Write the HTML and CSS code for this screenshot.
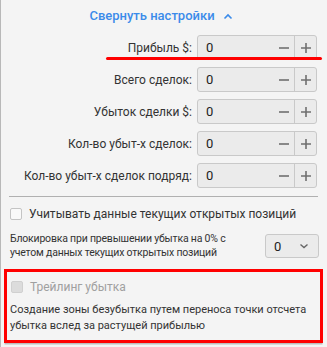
FILE: index.html
```html
<!DOCTYPE html>
<html lang="ru">
<head>
  <meta charset="UTF-8">
  <title>Настройки</title>
  <link rel="stylesheet" href="styles.css">
</head>
<body>
  <div class="panel">
    <div class="toggle">
      <span>Свернуть настройки</span>
      <svg width="10" height="7" viewBox="0 0 10 7"><path d="M1.5 5.5 L5 2 L8.5 5.5" fill="none" stroke="#3b8bea" stroke-width="1.6"/></svg>
    </div>

    <div class="fields">
      <div class="row marked">
        <label>Прибыль $:</label>
        <div class="stepper">
          <span class="value">0</span>
          <span class="btn minus"><svg width="12" height="12" viewBox="0 0 12 12"><path d="M1 6 H11" stroke="#707070" stroke-width="1.6"/></svg></span>
          <span class="btn"><svg width="12" height="12" viewBox="0 0 12 12"><path d="M1 6 H11 M6 1 V11" stroke="#707070" stroke-width="1.6"/></svg></span>
        </div>
      </div>
      <div class="row">
        <label>Всего сделок:</label>
        <div class="stepper">
          <span class="value">0</span>
          <span class="btn minus"><svg width="12" height="12" viewBox="0 0 12 12"><path d="M1 6 H11" stroke="#707070" stroke-width="1.6"/></svg></span>
          <span class="btn"><svg width="12" height="12" viewBox="0 0 12 12"><path d="M1 6 H11 M6 1 V11" stroke="#707070" stroke-width="1.6"/></svg></span>
        </div>
      </div>
      <div class="row">
        <label>Убыток сделки $:</label>
        <div class="stepper">
          <span class="value">0</span>
          <span class="btn minus"><svg width="12" height="12" viewBox="0 0 12 12"><path d="M1 6 H11" stroke="#707070" stroke-width="1.6"/></svg></span>
          <span class="btn"><svg width="12" height="12" viewBox="0 0 12 12"><path d="M1 6 H11 M6 1 V11" stroke="#707070" stroke-width="1.6"/></svg></span>
        </div>
      </div>
      <div class="row">
        <label>Кол-во убыт-х сделок:</label>
        <div class="stepper">
          <span class="value">0</span>
          <span class="btn minus"><svg width="12" height="12" viewBox="0 0 12 12"><path d="M1 6 H11" stroke="#707070" stroke-width="1.6"/></svg></span>
          <span class="btn"><svg width="12" height="12" viewBox="0 0 12 12"><path d="M1 6 H11 M6 1 V11" stroke="#707070" stroke-width="1.6"/></svg></span>
        </div>
      </div>
      <div class="row">
        <label>Кол-во убыт-х сделок подряд:</label>
        <div class="stepper">
          <span class="value">0</span>
          <span class="btn minus"><svg width="12" height="12" viewBox="0 0 12 12"><path d="M1 6 H11" stroke="#707070" stroke-width="1.6"/></svg></span>
          <span class="btn"><svg width="12" height="12" viewBox="0 0 12 12"><path d="M1 6 H11 M6 1 V11" stroke="#707070" stroke-width="1.6"/></svg></span>
        </div>
      </div>
    </div>

    <hr class="divider">

    <div class="check">
      <span class="box"></span>
      <span>Учитывать данные текущих открытых позиций</span>
    </div>

    <div class="block">
      <p>Блокировка при превышении убытка на 0% с учетом данных текущих открытых позиций</p>
      <div class="select">
        <span>0</span>
        <svg width="10" height="6" viewBox="0 0 10 6"><path d="M1.5 1.5 L5 4.5 L8.5 1.5" fill="none" stroke="#666" stroke-width="1.4"/></svg>
      </div>
    </div>

    <div class="trailing">
      <div class="check disabled">
        <span class="box"></span>
        <span>Трейлинг убытка</span>
      </div>
      <p>Создание зоны безубытка путем переноса точки отсчета убытка вслед за растущей прибылью</p>
    </div>
  </div>
</body>
</html>
```

FILE: styles.css
```css
* {
  box-sizing: border-box;
}

body {
  margin: 0;
  font-family: Roboto, 'Liberation Sans', sans-serif;
  background: #f4f4f4;
  color: #333;
  height: 347px;
  overflow: hidden;
}

.panel {
  border-left: 1px solid #b8b8b8;
  min-height: 347px;
  padding-top: 8px;
}

.toggle {
  display: flex;
  align-items: center;
  justify-content: center;
  gap: 8px;
  color: #3b8bea;
  font-size: 13px;
  font-weight: 500;
  line-height: 16px;
  padding-right: 6px;
}

.fields {
  display: flex;
  flex-direction: column;
  gap: 7px;
  margin-top: 11px;
  padding-right: 10px;
}

.row {
  display: flex;
  align-items: center;
  gap: 5px;
  position: relative;
}

.row label {
  flex: 1;
  text-align: right;
  font-size: 12px;
}

.row.marked::after {
  content: '';
  position: absolute;
  left: 105px;
  top: 22px;
  width: 216px;
  height: 3px;
  border-radius: 2px;
  background: #f00;
}

.stepper {
  width: 120px;
  height: 25px;
  display: flex;
  align-items: center;
  border: 1px solid #c9c9c9;
  border-radius: 3px;
  background: #ebebeb;
}

.stepper .value {
  flex: 1;
  padding-left: 8px;
  font-size: 13px;
  color: #222;
}

.stepper .btn {
  width: 21px;
  height: 100%;
  display: flex;
  align-items: center;
  justify-content: center;
}

.stepper .minus {
  border-right: 1px solid #c9c9c9;
}

.divider {
  border: none;
  border-top: 1px solid #b0b0b0;
  margin: 8px 9px 0 8px;
}

.check {
  display: flex;
  align-items: center;
  gap: 7px;
  font-size: 12px;
  margin: 10px 0 0 9px;
}

.check .box {
  width: 12px;
  height: 12px;
  border: 1px solid #c4c4c4;
  border-radius: 2px;
  background: #f9f9f9;
}

.block {
  display: flex;
  align-items: center;
  gap: 10px;
  margin: 11px 8px 0 9px;
}

.block p {
  flex: 1;
  margin: 0;
  font-size: 10.5px;
  letter-spacing: -0.2px;
  line-height: 14px;
}

.select {
  width: 54px;
  height: 24px;
  display: flex;
  align-items: center;
  justify-content: space-between;
  padding: 0 9px 0 8px;
  border: 1px solid #c9c9c9;
  border-radius: 3px;
  background: #ebebeb;
  font-size: 13px;
  color: #222;
}

.trailing {
  margin: 9px 4px 0 3px;
  border: 3px solid #f00;
  height: 74px;
  padding-top: 1px;
  box-shadow: 0 2px 0 -0.5px #bdbdbd;
}

.trailing .check {
  margin: 7px 0 0 4px;
}

.check.disabled {
  color: #a0a0a0;
}

.check.disabled .box {
  background: #dcdcdc;
  border-color: #d0d0d0;
}

.trailing p {
  margin: 8px 0 0 3px;
  font-size: 11px;
  line-height: 16px;
}
```
